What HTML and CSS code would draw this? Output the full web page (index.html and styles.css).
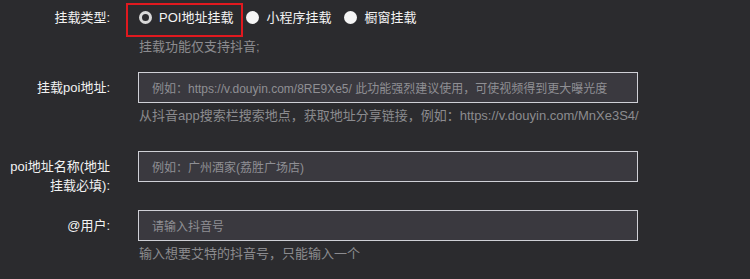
FILE: index.html
```html
<!DOCTYPE html>
<html lang="zh-CN">
<head>
<meta charset="utf-8">
<link rel="stylesheet" href="styles.css">
</head>
<body>
<div class="form">
  <div class="row row-type">
    <div class="label">挂载类型:</div>
    <div class="field">
      <div class="radios">
        <label class="radio checked"><span class="dot"></span><span class="rtext">POI地址挂载</span><span class="mark"></span></label>
        <label class="radio"><span class="dot"></span><span class="rtext">小程序挂载</span></label>
        <label class="radio"><span class="dot"></span><span class="rtext">橱窗挂载</span></label>
      </div>
      <div class="help">挂载功能仅支持抖音;</div>
    </div>
  </div>
  <div class="row row-poi">
    <div class="label">挂载poi地址:</div>
    <div class="field">
      <div class="input"><span class="ph">例如：https://v.douyin.com/8RE9Xe5/ 此功能强烈建议使用，可使视频得到更大曝光度</span></div>
      <div class="help">从抖音app搜索栏搜索地点，获取地址分享链接，例如：https://v.douyin.com/MnXe3S4/</div>
    </div>
  </div>
  <div class="row row-name">
    <div class="label">poi地址名称(地址<br>挂载必填):</div>
    <div class="field">
      <div class="input"><span class="ph">例如：广州酒家(荔胜广场店)</span></div>
    </div>
  </div>
  <div class="row row-user">
    <div class="label">@用户:</div>
    <div class="field">
      <div class="input"><span class="ph">请输入抖音号</span></div>
      <div class="help">输入想要艾特的抖音号，只能输入一个</div>
    </div>
  </div>
</div>
</body>
</html>
```

FILE: styles.css
```css
html, body {
  margin: 0;
  padding: 0;
  background: #2b2b2e;
}
body {
  font-family: "Liberation Sans", "Noto Sans CJK SC", sans-serif;
  font-size: 13px;
  color: #f0f0f0;
  width: 750px;
  height: 279px;
  overflow: hidden;
}
.form {
  padding-left: 10px;
}
.row {
  display: grid;
  grid-template-columns: 100px 1fr;
  column-gap: 28px;
  align-items: start;
}
.label {
  text-align: right;
  line-height: 19px;
  padding-top: 6px;
  color: #f2f2f2;
  white-space: nowrap;
}
.row-type .label {
  padding-top: 8px;
}
.row-poi { margin-top: 15px; }
.row-name { margin-top: 25px; }
.row-user { margin-top: 15px; }

.radios {
  display: flex;
  align-items: center;
  height: 35px;
}
.radio {
  position: relative;
  display: flex;
  align-items: center;
  margin-left: 1px;
  margin-right: 13px;
  color: #f4f4f4;
}
.radio + .radio { margin-left: 0; }
.dot {
  width: 13px;
  height: 13px;
  box-sizing: border-box;
  border-radius: 50%;
  background: #f5f5f5;
  margin-right: 7px;
}
.radio.checked .dot {
  background: #2b2b2e;
  border: 3px solid #d9d9d9;
}
.rtext { line-height: 19px; }
.mark {
  position: absolute;
  left: -13px;
  top: -5px;
  width: 117px;
  height: 34px;
  box-sizing: border-box;
  border: 2px solid #e0191f;
}
.help {
  color: #8b8b8f;
  line-height: 20px;
  margin-top: 3px;
  padding-left: 1px;
  white-space: nowrap;
}
.row-type .help { margin-top: 2px; }
.input {
  width: 500px;
  height: 31px;
  box-sizing: border-box;
  border: 1px solid #cfd0d6;
  background: #3a393f;
  display: flex;
  align-items: center;
  padding-left: 13px;
}
.ph {
  font-size: 12px;
  color: #8f8f94;
  white-space: nowrap;
}
```
